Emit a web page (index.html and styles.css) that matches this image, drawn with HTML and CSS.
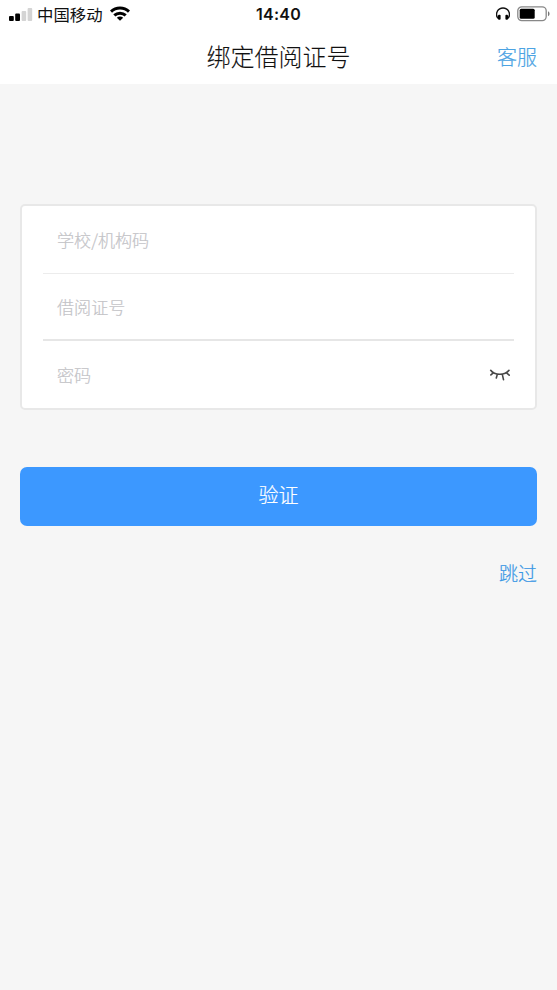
FILE: index.html
```html
<!DOCTYPE html>
<html lang="zh-CN">
<head>
<meta charset="utf-8">
<title>绑定借阅证号</title>
<link rel="stylesheet" href="styles.css">
</head>
<body>
<header class="top">
  <div class="status">
    <div class="status-left">
      <svg class="signal" width="24" height="13" viewBox="0 0 24 13"><rect x="0" y="8" width="4.800" height="5" rx="1"/><rect x="6.200" y="5.500" width="4.800" height="7.500" rx="1"/><rect x="12.600" y="3" width="4.600" height="10" rx="1" fill="#d4d4d4"/><rect x="18.600" y="0" width="4.600" height="13" rx="1" fill="#d4d4d4"/></svg>
      <span class="carrier">中国移动</span>
      <svg class="wifi" width="20" height="15" viewBox="0 0 20 15"><g fill="none" stroke="#000" stroke-width="3"><path d="M1 5.600C6 .8 14 .8 19 5.600"/><path d="M4.300 9.400c3.200-3 8.200-3 11.400 0"/></g><path d="M6.800 11.700c1.800-1.600 4.600-1.600 6.400 0L10 14.800z"/></svg>
    </div>
    <span class="clock">14:40</span>
    <div class="status-right">
      <svg width="14" height="14" viewBox="0 0 14 14"><path d="M2.400 11.500C-.1 9.200.2 6.500 1.400 4.200 3.800-.1 10.200-.1 12.600 4.200c1.200 2.300 1.500 5-1 7.300" fill="none" stroke="#111" stroke-width="1.400"/><rect x="2" y="7.800" width="2.600" height="5" rx="1"/><rect x="9.400" y="7.800" width="2.600" height="5" rx="1"/></svg>
      <svg width="33" height="16" viewBox="0 0 33 16"><rect x=".8" y=".8" width="28.400" height="13.800" rx="4" fill="none" stroke="#888" stroke-width="1.300"/><rect x="2.700" y="2.800" width="15" height="10" rx="1.500"/><path d="M31 5.200c2 .8 2 4.200 0 5z" fill="#777"/></svg>
    </div>
  </div>
  <div class="nav">
    <h1 class="title">绑定借阅证号</h1>
    <a class="service">客服</a>
  </div>
</header>
<main class="content">
  <form class="card">
    <div class="field"><span>学校/机构码</span></div>
    <div class="field field-mid"><span>借阅证号</span></div>
    <div class="field field-last"><span>密码</span>
      <svg class="eye" width="22" height="14" viewBox="0 0 22 14" fill="none" stroke="#484848" stroke-width="1.600" stroke-linecap="round"><path d="M1.700 2.300C5.500 7.600 16 7.600 20 2.300M4.300 4.800 1.900 6.900M8.300 6.400l-1 3.600M13.300 6.400l1.200 5.200M17.500 4.900l2.700 2.300"/></svg>
    </div>
  </form>
  <div class="submit">验证</div>
  <a class="skip">跳过</a>
</main>
</body>
</html>
```
FILE: styles.css
```css
* { box-sizing: border-box; }
body {
  margin: 0;
  min-height: 990px;
  background: #f6f6f6;
  font-family: "Noto Sans CJK SC", sans-serif;
  font-weight: 300;
  -webkit-text-stroke: .2px currentColor;
}
.top { height: 84px; background: #fff; }
.status {
  display: grid;
  grid-template-columns: 1fr auto 1fr;
  align-items: center;
  height: 28px;
  padding: 0 7px 0 9px;
}
.status-left, .status-right { display: flex; align-items: center; }
.status-right { justify-content: flex-end; gap: 7px; }
.signal { margin-top: 0; }
.carrier { margin-left: 4px; font-size: 16.4px; line-height: 28px; font-weight: 400; color: #111; -webkit-text-stroke: 0; }
.wifi { margin-left: 7px; margin-top: -2px; }
.clock { margin-right: 2px; font: 600 16px/28px Inter, sans-serif; letter-spacing: .3px; color: #111; -webkit-text-stroke: 0; }
.nav {
  display: grid;
  grid-template-columns: 1fr auto 1fr;
  align-items: center;
  height: 56px;
  padding: 0 20px;
}
.title { grid-column: 2; margin: 0; font-size: 24px; line-height: 56px; font-weight: 300; color: #111; -webkit-text-stroke: .1px currentColor; }
.service { justify-self: end; font-size: 20px; color: #4ba3e3; }
.content { display: flex; flex-direction: column; padding: 120px 20px 0; }
.card {
  height: 206px;
  padding: 0 21px;
  background: #fff;
  border: 2px solid #e8e8e8;
  border-radius: 5px;
}
.field {
  display: flex;
  align-items: center;
  justify-content: space-between;
  height: 68px;
  padding: 0 3px 0 14px;
  border-bottom: 1px solid #ececec;
  font-size: 17.1px;
  color: #c3c3c7;
}
.field span { margin-top: -1px; }
.field-mid { height: 67px; border-bottom: 2px solid #e6e6e6; }
.field-last { height: 67px; border: 0; }
.eye { display: block; margin-top: 1px; }
.submit {
  height: 59px;
  margin-top: 57px;
  border-radius: 7px;
  background: #3c98ff;
  color: #fff;
  font-size: 20px;
  line-height: 56px;
  text-align: center;
}
.skip { align-self: flex-end; margin-top: 33px; font-size: 19px; line-height: 28px; color: #3997e5; }
```
